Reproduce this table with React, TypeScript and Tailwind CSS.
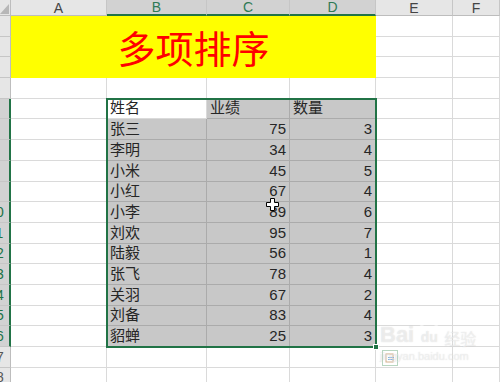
import React from "react"

const COLS = ["A", "B", "C", "D", "E", "F"]
const ROW_H = 20.69

const data: [string, number, number][] = [
  ["张三", 75, 3],
  ["李明", 34, 4],
  ["小米", 45, 5],
  ["小红", 67, 4],
  ["小李", 89, 6],
  ["刘欢", 95, 7],
  ["陆毅", 56, 1],
  ["张飞", 78, 4],
  ["关羽", 67, 2],
  ["刘备", 83, 4],
  ["貂蝉", 25, 3],
]

const font = { fontFamily: '"Liberation Sans", "Noto Sans CJK SC", sans-serif' }

function Cell({ className = "", children }: { className?: string; children?: React.ReactNode }) {
  return (
    <div className={`flex items-end overflow-hidden border-r border-b border-[#dadada] px-[3px] pb-[1px] text-[15px] leading-[18px] text-[#262626] ${className}`}>
      {children}
    </div>
  )
}

function TableCell({ className = "", children }: { className?: string; children?: React.ReactNode }) {
  return (
    <div className={`flex items-end overflow-hidden border-r border-b border-[#ababab] bg-[#c8c8c8] px-[3px] pb-[1px] text-[15px] leading-[18px] text-[#262626] ${className}`}>
      {children}
    </div>
  )
}

// the row header is scrolled partly off the left edge: a 30px wide header, 11px of it visible
function RowHead({ n }: { n: number }) {
  const sel = n >= 5 && n <= 16
  return (
    <div
      className={`flex items-end overflow-hidden border-b border-[#c6c6c6] pb-[1px] text-[14px] leading-[18px] ${
        sel ? "border-r-2 border-r-[#217346] bg-[#d2d2d2] text-[#217346]" : "border-r border-r-[#bdbdbd] bg-[#e6e6e6] text-[#555]"
      }`}
    >
      <span className="ml-[-19px] w-[30px] shrink-0 text-center whitespace-nowrap">{n}</span>
    </div>
  )
}

export default function App() {
  const rows: React.ReactNode[] = []

  for (let r = 1; r <= 18; r++) {
    rows.push(<RowHead key={`h${r}`} n={r} />)
    if (r <= 3) {
      if (r === 1) {
        rows.push(
          <div
            key="title"
            className="col-span-4 row-span-3 flex items-center justify-center bg-[#ffff00] text-[38px] leading-none text-[#ff0000]"
            style={{ fontFamily: '"Noto Sans CJK SC", sans-serif' }}
          >
            多项排序
          </div>
        )
      }
      rows.push(<Cell key={`e${r}`} />)
      rows.push(<Cell key={`f${r}`} />)
      continue
    }
    if (r === 5) {
      rows.push(<Cell key="a5" />)
      rows.push(<Cell key="b5" className="bg-white">姓名</Cell>)
      rows.push(<TableCell key="c5">业绩</TableCell>)
      rows.push(<TableCell key="d5">数量</TableCell>)
      rows.push(<Cell key="e5" />)
      rows.push(<Cell key="f5" />)
      continue
    }
    if (r >= 6 && r <= 16) {
      const [name, score, qty] = data[r - 6]
      rows.push(<Cell key={`a${r}`} />)
      rows.push(<TableCell key={`b${r}`}>{name}</TableCell>)
      rows.push(<TableCell key={`c${r}`} className="justify-end">{score}</TableCell>)
      rows.push(<TableCell key={`d${r}`} className="justify-end">{qty}</TableCell>)
      rows.push(<Cell key={`e${r}`} />)
      rows.push(<Cell key={`f${r}`} />)
      continue
    }
    for (let c = 0; c < 6; c++) rows.push(<Cell key={`x${r}-${c}`} />)
  }

  return (
    <div className="relative h-[382px] w-[500px] overflow-hidden bg-white" style={font}>
      <div
        className="grid"
        style={{
          gridTemplateColumns: "11px 96px 100px 83px 86px 77px 47px",
          gridTemplateRows: `16px repeat(18, ${ROW_H}px)`,
        }}
      >
        {/* corner */}
        <div className="relative border-r border-b border-[#bdbdbd] bg-[#e6e6e6]">
          <svg className="absolute left-0 top-[4px]" width="9" height="10" viewBox="0 0 9 10">
            <polygon points="9,0 9,10 0,10" fill="#b7b7b7" />
          </svg>
        </div>
        {COLS.map((c) => {
          const sel = c === "B" || c === "C" || c === "D"
          return (
            <div
              key={c}
              className={`flex items-center justify-center border-r border-[#c6c6c6] text-[14px] leading-none ${
                sel ? "border-b-2 border-b-[#217346] bg-[#d2d2d2] text-[#2f7a55]" : "border-b border-b-[#bdbdbd] bg-[#e6e6e6] text-[#444]"
              }`}
            >
              {c}
            </div>
          )
        })}
        {rows}
      </div>

      {/* selection outline */}
      <div className="absolute left-[106px] top-[98px] h-[250px] w-[271px] border-2 border-[#217346]" />
      <div className="absolute left-[373px] top-[344px] h-[6px] w-[6px] border border-white bg-[#217346]" />

      {/* cursor */}
      <svg className="absolute left-[266px] top-[198px]" width="13" height="13" viewBox="0 0 13 13">
        <path d="M4.5 0.5h4v4h4v4h-4v4h-4v-4h-4v-4h4z" fill="#fff" stroke="#000" strokeWidth="1" />
      </svg>

      {/* paste options */}
      <div className="absolute left-[382px] top-[350px] flex h-[16px] w-[16px] items-center justify-center border border-[#b8d6c1] bg-white/70">
        <svg width="10" height="10" viewBox="0 0 10 10">
          <rect x="1" y="1" width="7" height="8" fill="none" stroke="#d4b08c" strokeWidth="1" />
          <rect x="3" y="4" width="6" height="1" fill="#8fb3de" />
          <rect x="3" y="6" width="6" height="1" fill="#8fb3de" />
        </svg>
      </div>

      {/* watermark */}
      <div
        className="pointer-events-none absolute left-[380px] top-[322px] flex flex-col whitespace-nowrap text-white/50"
        style={{ textShadow: "0 0 1px rgba(140,140,140,0.35)" }}
      >
        <div className="flex items-end text-[22px] font-bold leading-none">
          <span>Bai</span>
          <span className="relative ml-[2px] flex h-[24px] w-[26px] items-end justify-center rounded-t-full border-2 border-white/50 text-[14px]">du</span>
          <span className="ml-[2px] text-[16px] font-normal" style={{ fontFamily: '"Noto Sans CJK SC", sans-serif' }}>经验</span>
        </div>
        <div className="mt-[5px] text-[11px] leading-none">jingyan.baidu.com</div>
      </div>
    </div>
  )
}
